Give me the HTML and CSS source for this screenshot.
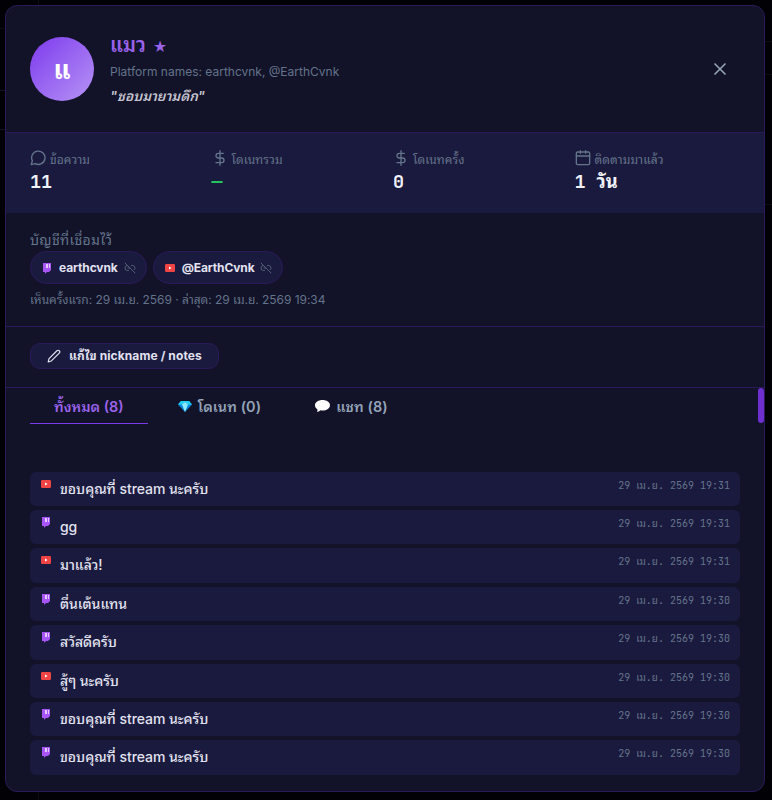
FILE: index.html
```
<!DOCTYPE html>
<html lang="th">
<head>
    <meta charset="UTF-8">
    <meta name="viewport" content="width=device-width, initial-scale=1.0">
    <title>แมว</title>
    <link rel="stylesheet" href="styles.css">
</head>
<body>
    <svg class="sprite" aria-hidden="true">
        <symbol id="twitch" viewBox="0 0 10 12">
            <path fill="#a855f7" d="M1 1h8v7L7 10H5L3.5 11.5H3V10H1z"/>
            <path fill="#e4c9ff" d="M4 2h2v4H4zM7 2h1v4H7z"/>
        </symbol>
        <symbol id="youtube" viewBox="0 0 10 8">
            <rect width="10" height="8" rx="1.2" fill="#ef4444"/>
            <path fill="#fff" d="M4 2.4v3.2L6.6 4z"/>
        </symbol>
        <symbol id="dollar" viewBox="0 0 24 24">
            <path d="M12 1v22M17 5H9.5a3.5 3.5 0 0 0 0 7h5a3.5 3.5 0 0 1 0 7H6"/>
        </symbol>
        <symbol id="unlink" viewBox="0 0 24 24">
            <path d="M9 17H7A5 5 0 0 1 7 7M15 7h2a5 5 0 0 1 4 8M8 12h4M2 2l20 20"/>
        </symbol>
    </svg>
    <div class="modal">
        <div class="modal-header">
            <div class="avatar">แ</div>
            <div class="profile">
                <div class="name">แมว <span class="star">★</span></div>
                <div class="platform-names">Platform names: earthcvnk, @EarthCvnk</div>
                <div class="note">"ชอบมายามดึก"</div>
            </div>
            <button class="close-btn" aria-label="ปิด">
                <svg class="icon" viewBox="0 0 24 24"><path d="M18 6 6 18M6 6l12 12"/></svg>
            </button>
        </div>

        <div class="stats">
            <div class="stat">
                <div class="stat-label"><svg class="icon" viewBox="0 0 24 24"><path d="M7.9 20.5A10 10 0 1 0 3.6 16.2L1.8 22z"/></svg>ข้อความ</div>
                <div class="stat-value">11</div>
            </div>
            <div class="stat">
                <div class="stat-label"><svg class="icon"><use href="#dollar"/></svg>โดเนทรวม</div>
                <div class="stat-value green">—</div>
            </div>
            <div class="stat">
                <div class="stat-label"><svg class="icon"><use href="#dollar"/></svg>โดเนทครั้ง</div>
                <div class="stat-value zero">0</div>
            </div>
            <div class="stat">
                <div class="stat-label"><svg class="icon" viewBox="0 0 24 24"><rect x="2" y="3" width="20" height="19" rx="2"/><path d="M8 1v4M16 1v4M2 9h20"/></svg>ติดตามมาแล้ว</div>
                <div class="stat-value">1 วัน</div>
            </div>
        </div>

        <div class="accounts">
            <div class="accounts-title">บัญชีที่เชื่อมไว้</div>
            <div class="chips">
                <span class="chip"><svg class="twitch"><use href="#twitch"/></svg>earthcvnk<svg class="icon unlink"><use href="#unlink"/></svg></span>
                <span class="chip"><svg class="youtube"><use href="#youtube"/></svg>@EarthCvnk<svg class="icon unlink"><use href="#unlink"/></svg></span>
            </div>
            <div class="seen">เห็นครั้งแรก: 29 เม.ย. 2569 · ล่าสุด: 29 เม.ย. 2569 19:34</div>
        </div>

        <div class="actions">
            <button class="edit-btn">
                <svg class="icon" viewBox="0 0 24 24"><path d="M17 3a2.8 2.8 0 1 1 4 4L7.5 20.5 2 22l1.5-5.5z"/></svg>
                <span>แก้ไข nickname / notes</span>
            </button>
        </div>

        <div class="history">
            <div class="tabs">
                <div class="tab active">ทั้งหมด (8)</div>
                <div class="tab">
                    <svg class="gem" viewBox="0 0 14 11"><path fill="#0788dd" d="M3 0h8l3 3.5L7 11 0 3.5z"/><path fill="#21d4f5" d="M3 0h8l3 3.5h-4L7 1 4 3.5H0z"/><path fill="#8ee9ff" d="M7 1l3 2.5L7 11 4 3.5z"/></svg>
                    โดเนท (0)
                </div>
                <div class="tab">
                    <svg class="bubble" viewBox="0 0 15 12"><path fill="#fff" d="M7.5 0C11.6 0 15 2.2 15 5.2s-3.4 5.3-7.5 5.3c-.8 0-1.5 0-2.2-.2C4.3 11.3 3 12 1.8 12c.6-.8.8-1.6.7-2.6C1 8.4 0 7 0 5.2 0 2.2 3.4 0 7.5 0z"/></svg>
                    แชท (8)
                </div>
            </div>
            <div class="messages">
                <div class="message"><svg class="youtube"><use href="#youtube"/></svg><span class="text">ขอบคุณที่ stream นะครับ</span><span class="time">29 เม.ย. 2569 19:31</span></div>
                <div class="message"><svg class="twitch"><use href="#twitch"/></svg><span class="text">gg</span><span class="time">29 เม.ย. 2569 19:31</span></div>
                <div class="message"><svg class="youtube"><use href="#youtube"/></svg><span class="text">มาแล้ว!</span><span class="time">29 เม.ย. 2569 19:31</span></div>
                <div class="message"><svg class="twitch"><use href="#twitch"/></svg><span class="text">ตื่นเต้นแทน</span><span class="time">29 เม.ย. 2569 19:30</span></div>
                <div class="message"><svg class="twitch"><use href="#twitch"/></svg><span class="text">สวัสดีครับ</span><span class="time">29 เม.ย. 2569 19:30</span></div>
                <div class="message"><svg class="youtube"><use href="#youtube"/></svg><span class="text">สู้ๆ นะครับ</span><span class="time">29 เม.ย. 2569 19:30</span></div>
                <div class="message"><svg class="twitch"><use href="#twitch"/></svg><span class="text">ขอบคุณที่ stream นะครับ</span><span class="time">29 เม.ย. 2569 19:30</span></div>
                <div class="message"><svg class="twitch"><use href="#twitch"/></svg><span class="text">ขอบคุณที่ stream นะครับ</span><span class="time">29 เม.ย. 2569 19:30</span></div>
            </div>
            <div class="scroll-thumb"></div>
        </div>
    </div>
</body>
</html>
```
FILE: styles.css
```
:root {
    --bg: #020206;
    --panel: #121228;
    --card: #1a1a3e;
    --line: #2a1a5a;
    --text: #e2e2f0;
    --muted: #64748b;
    --soft: #94a3b8;
    --purple: #9a63ea;
    --thai: 'Noto Sans Thai Looped', Loma, Waree, Garuda, Umpush, Tahoma;
    --mono: 'JetBrains Mono', 'Liberation Mono', var(--thai), monospace;
}

* {
    box-sizing: border-box;
}

body {
    margin: 0;
    padding: 5px 7px 8px 5px;
    height: 800px;
    background:
        linear-gradient(#15102c, #15102c) 0 90px / 5px 1px no-repeat,
        linear-gradient(#15102c, #15102c) 0 129px / 5px 1px no-repeat,
        linear-gradient(#0c0c18, #0c0c18) 0 28px / 5px 1px no-repeat,
        linear-gradient(#0c0c14, #0c0c14) 38px 0 / 1px 100% no-repeat,
        linear-gradient(#0c0c14, #0c0c14) 100% 41px / 7px 1px no-repeat,
        linear-gradient(#0c0c14, #0c0c14) 100% 74px / 7px 1px no-repeat,
        linear-gradient(#0c0c14, #0c0c14) 100% 204px / 7px 1px no-repeat,
        var(--bg);
    color: var(--text);
    font-family: Inter, var(--thai), sans-serif;
    font-size: 14px;
    overflow: hidden;
}

svg {
    display: block;
    flex: none;
}

.sprite {
    position: absolute;
    width: 0;
    height: 0;
}

.icon {
    width: 16px;
    height: 16px;
    fill: none;
    stroke: currentColor;
    stroke-width: 2;
    stroke-linecap: round;
    stroke-linejoin: round;
}

.twitch {
    width: 10px;
    height: 12px;
}

.youtube {
    width: 10px;
    height: 8px;
}

.modal {
    display: flex;
    flex-direction: column;
    height: 787px;
    background: var(--panel);
    border: 1px solid var(--line);
    border-radius: 12px;
    overflow: hidden;
}

.modal-header {
    display: flex;
    align-items: center;
    gap: 16px;
    height: 127px;
    flex: none;
    padding: 0 24px;
    border-bottom: 1px solid var(--line);
}

.avatar {
    display: flex;
    align-items: center;
    justify-content: center;
    width: 64px;
    height: 64px;
    padding-bottom: 3px;
    border-radius: 50%;
    background: linear-gradient(135deg, #7c3aed, #b794f6);
    color: #fff;
    font-size: 25.6px;
    font-weight: 700;
}

.profile {
    flex: 1;
    padding-top: 2px;
}

.name {
    line-height: 28px;
    font-size: 20px;
    font-weight: 600;
    color: var(--purple);
}

.star {
    margin-left: 2px;
    font-size: 14px;
}

.platform-names {
    line-height: 22px;
    font-size: 12px;
    color: var(--muted);
}

.note {
    line-height: 26px;
    font-size: 13.6px;
    font-style: italic;
    font-weight: 600;
    color: #c4c4d0;
}

.close-btn {
    display: flex;
    align-items: center;
    justify-content: center;
    width: 40px;
    height: 40px;
    padding: 0;
    border: none;
    background: none;
    color: var(--soft);
    cursor: pointer;
}

.close-btn .icon {
    width: 20px;
    height: 20px;
}

.stats {
    display: grid;
    grid-template-columns: repeat(4, 1fr);
    gap: 16px;
    height: 80px;
    flex: none;
    padding: 16px 24px;
    background: var(--card);
}

.stat-label {
    display: flex;
    align-items: center;
    gap: 4px;
    height: 19px;
    font-size: 12px;
    letter-spacing: 0.1px;
    color: var(--muted);
}

.stat-label .icon {
    margin-top: -1px;
    stroke-width: 2;
}

.stat-value {
    line-height: 27px;
    font-family: var(--mono);
    font-size: 18.4px;
    font-weight: 700;
    color: #f1f1fa;
}

.stat-value.green {
    color: #22c55e;
}

.accounts {
    height: 114px;
    flex: none;
    padding: 16px 24px 0;
    border-bottom: 1px solid var(--line);
}

.accounts-title {
    line-height: 22px;
    letter-spacing: 0.3px;
    color: var(--muted);
}

.chips {
    display: flex;
    gap: 6px;
}

.chip {
    display: flex;
    align-items: center;
    height: 33px;
    padding: 0 10px 0 11px;
    border: 1px solid var(--line);
    border-radius: 17px;
    background: var(--card);
    font-size: 12px;
    font-weight: 700;
    letter-spacing: -0.12px;
}

.chip .twitch,
.chip .youtube {
    margin-right: 7px;
}

.chip .unlink {
    width: 12px;
    height: 12px;
    margin-left: 6px;
    color: #535f78;
}

.seen {
    margin-top: 5px;
    line-height: 22px;
    font-size: 12px;
    letter-spacing: -0.04px;
    color: var(--muted);
}

.actions {
    height: 61px;
    flex: none;
    padding: 16px 24px;
    border-bottom: 1px solid var(--line);
}

.edit-btn {
    display: flex;
    align-items: center;
    gap: 8px;
    height: 26px;
    padding: 0 16px;
    border: 1px solid var(--line);
    border-radius: 10px;
    background: var(--card);
    color: var(--text);
    font-family: inherit;
    font-size: 12px;
    font-weight: 700;
    letter-spacing: 0.1px;
    cursor: pointer;
}

.edit-btn .icon {
    width: 14px;
    height: 14px;
}

.edit-btn span {
    margin-top: -3px;
}

.history {
    position: relative;
    flex: 1;
    padding: 0 24px;
}

.tabs {
    display: flex;
    gap: 6px;
    height: 36px;
}

.tab {
    display: flex;
    align-items: center;
    gap: 6px;
    padding: 0 24px 1px;
    border-bottom: 1px solid transparent;
    font-size: 14.4px;
    font-weight: 600;
    letter-spacing: 0.1px;
    color: var(--soft);
}

.tab.active {
    letter-spacing: 0;
    color: var(--purple);
    border-bottom-color: #7c3aed;
}

.gem {
    width: 14px;
    height: 11px;
    margin-top: 3px;
}

.bubble {
    width: 15px;
    height: 12px;
    margin-top: 2px;
}

.messages {
    display: flex;
    flex-direction: column;
    gap: 4px;
    margin-top: 47.6px;
}

.message {
    display: flex;
    align-items: flex-start;
    height: 34.4px;
    padding: 8px 10px;
    border-radius: 6px;
    background: var(--card);
}

.message .twitch {
    margin: -2px 0 0 1px;
}

.message .youtube {
    margin-left: 1px;
}

.text {
    flex: 1;
    margin-left: 9px;
    line-height: 18px;
    font-size: 14px;
    font-weight: 500;
    letter-spacing: -0.06px;
}

.time {
    line-height: 12px;
    font-family: var(--mono);
    font-size: 10px;
    color: var(--muted);
}

.scroll-thumb {
    position: absolute;
    top: 0;
    right: 0;
    width: 6px;
    height: 35px;
    border-radius: 3px;
    background: #6d2fce;
}
```
